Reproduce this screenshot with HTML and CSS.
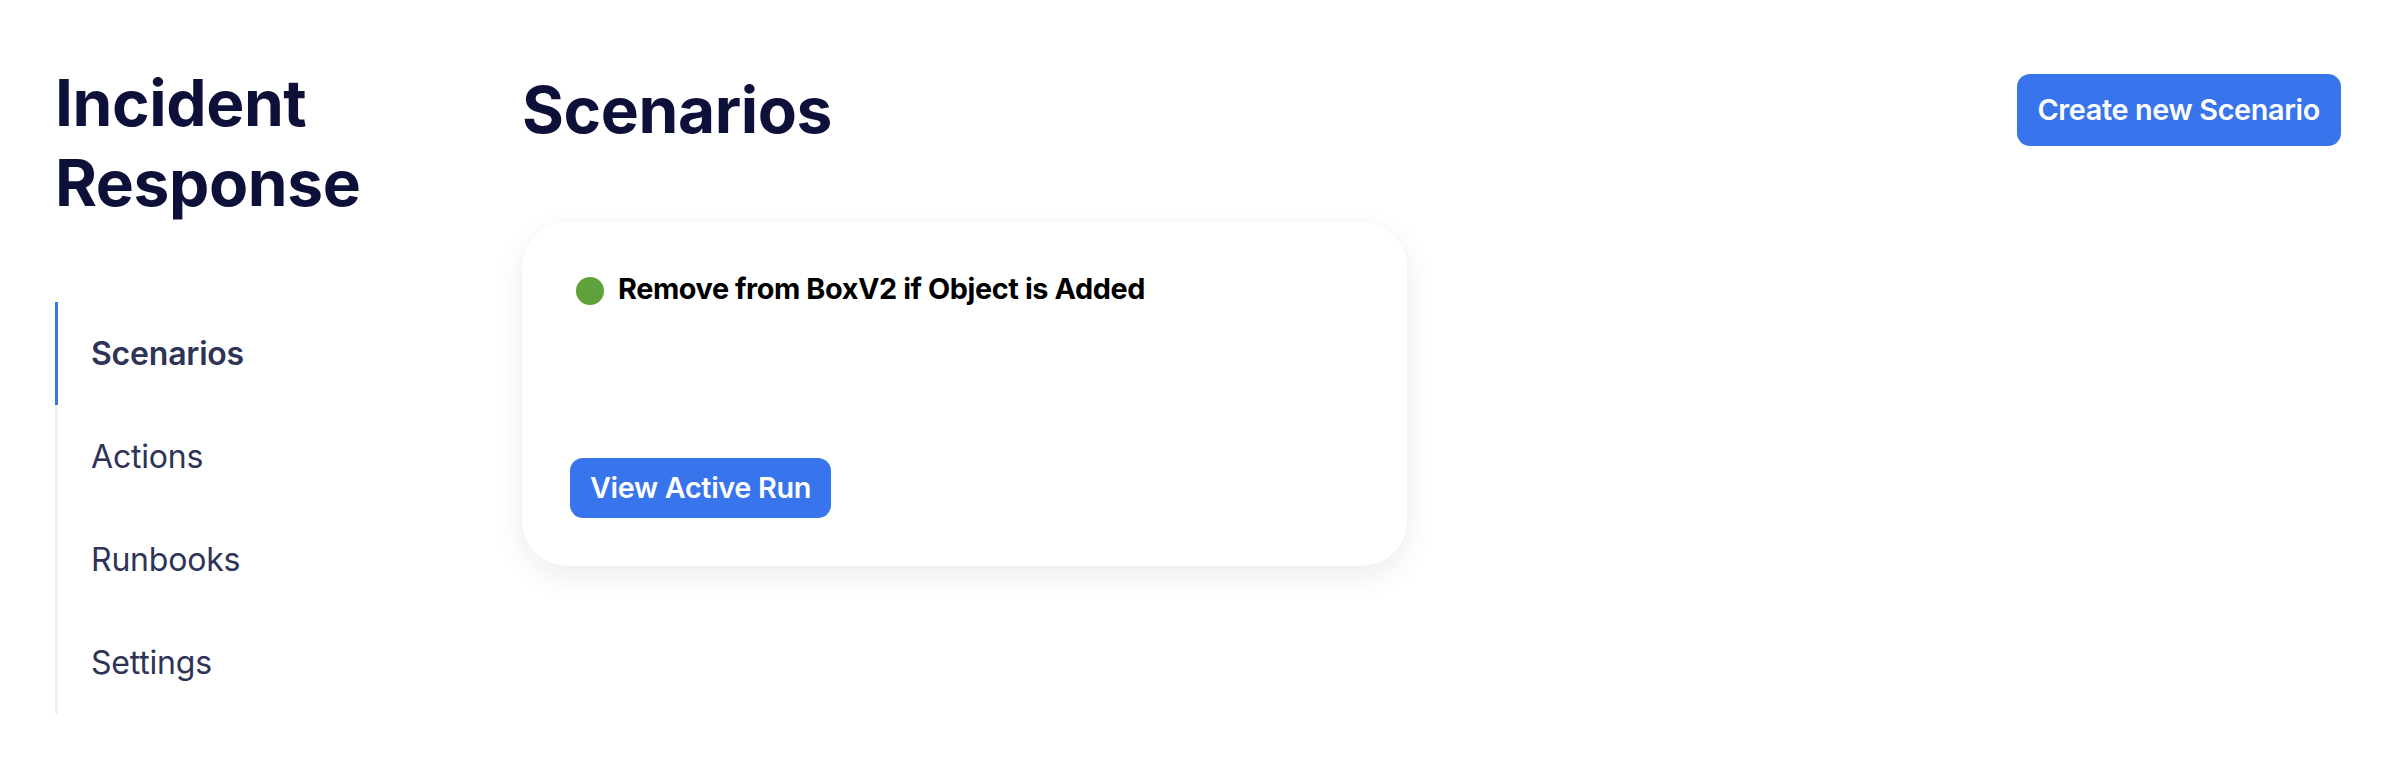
FILE: index.html
```html
<!DOCTYPE html>
<html lang="en">
<head>
<meta charset="utf-8">
<title>Incident Response</title>
<link rel="stylesheet" href="styles.css">
</head>
<body>
<div class="page">
  <aside class="sidebar">
    <h1 class="app-title">Incident Response</h1>
    <nav class="nav">
      <a class="nav-item active">Scenarios</a>
      <a class="nav-item">Actions</a>
      <a class="nav-item">Runbooks</a>
      <a class="nav-item">Settings</a>
    </nav>
  </aside>
  <main class="main">
    <header class="main-header">
      <h2 class="page-title">Scenarios</h2>
      <button class="btn btn-create">Create new Scenario</button>
    </header>
    <section class="grid">
      <article class="card">
        <div class="card-title-row">
          <span class="status-dot"></span>
          <span class="card-title">Remove from BoxV2 if Object is Added</span>
        </div>
        <div class="card-actions">
          <button class="btn btn-run">View Active Run</button>
        </div>
      </article>
    </section>
  </main>
</div>
</body>
</html>
```
FILE: styles.css
```css
* { box-sizing: border-box; }
html, body { margin: 0; padding: 0; background: #ffffff; }
body {
  font-family: Inter, "Noto Sans", "Liberation Sans", sans-serif;
  color: #0d1039;
}
.page {
  display: grid;
  grid-template-columns: 467px 1fr;
  padding: 63px 59px 0 55px;
  min-height: 778px;
}
.sidebar { display: flex; flex-direction: column; }
.app-title {
  margin: 0;
  font-size: 64px;
  line-height: 80px;
  font-weight: 700;
  color: #0d1039;
  letter-spacing: -0.4px;
}
.nav {
  margin-top: 79px;
  display: flex;
  flex-direction: column;
  border-left: 3px solid #f1f1f5;
  width: 300px;
}
.nav-item {
  display: block;
  margin-left: -3px;
  border-left: 3px solid transparent;
  padding: 32px 33px;
  font-size: 32px;
  line-height: 39px;
  color: #2e3358;
  font-weight: 400;
  letter-spacing: -0.2px;
}
.nav-item.active {
  border-left-color: #3874eb;
  font-weight: 600;
}
.main { padding-top: 11px; }
.main-header {
  display: flex;
  align-items: center;
  justify-content: space-between;
  height: 72px;
}
.page-title {
  margin: 0;
  font-size: 64px;
  line-height: 80px;
  font-weight: 700;
  color: #0d1039;
  letter-spacing: -0.4px;
}
.btn {
  font-family: inherit;
  border: none;
  background: #3874eb;
  color: #ffffff;
  font-weight: 600;
  font-size: 28.8px;
  letter-spacing: -0.35px;
  cursor: pointer;
}
.btn-create {
  height: 72px;
  padding: 0 21px;
  border-radius: 13px;
  line-height: 34px;
}
.grid {
  margin-top: 76px;
  display: grid;
  grid-template-columns: repeat(2, 1fr);
  gap: 49px;
}
.card {
  height: 344px;
  border-radius: 45px;
  background: #ffffff;
  box-shadow: 0 10px 30px rgba(20, 24, 60, 0.08), 0 0 6px rgba(20, 24, 60, 0.02);
  padding: 48px;
  display: flex;
  flex-direction: column;
  justify-content: space-between;
}
.card-title-row {
  display: flex;
  align-items: center;
  gap: 14px;
  padding-left: 6px;
  height: 36px;
}
.status-dot {
  width: 28px;
  height: 28px;
  margin-top: 5px;
  border-radius: 50%;
  background: #5fa13a;
  flex: none;
}
.card-title {
  font-size: 28.8px;
  font-weight: 700;
  color: #000000;
  line-height: 33px;
  letter-spacing: -0.4px;
}
.card-actions { display: flex; }
.btn-run {
  height: 60px;
  padding: 0 20px;
  border-radius: 13px;
  line-height: 34px;
}
```
